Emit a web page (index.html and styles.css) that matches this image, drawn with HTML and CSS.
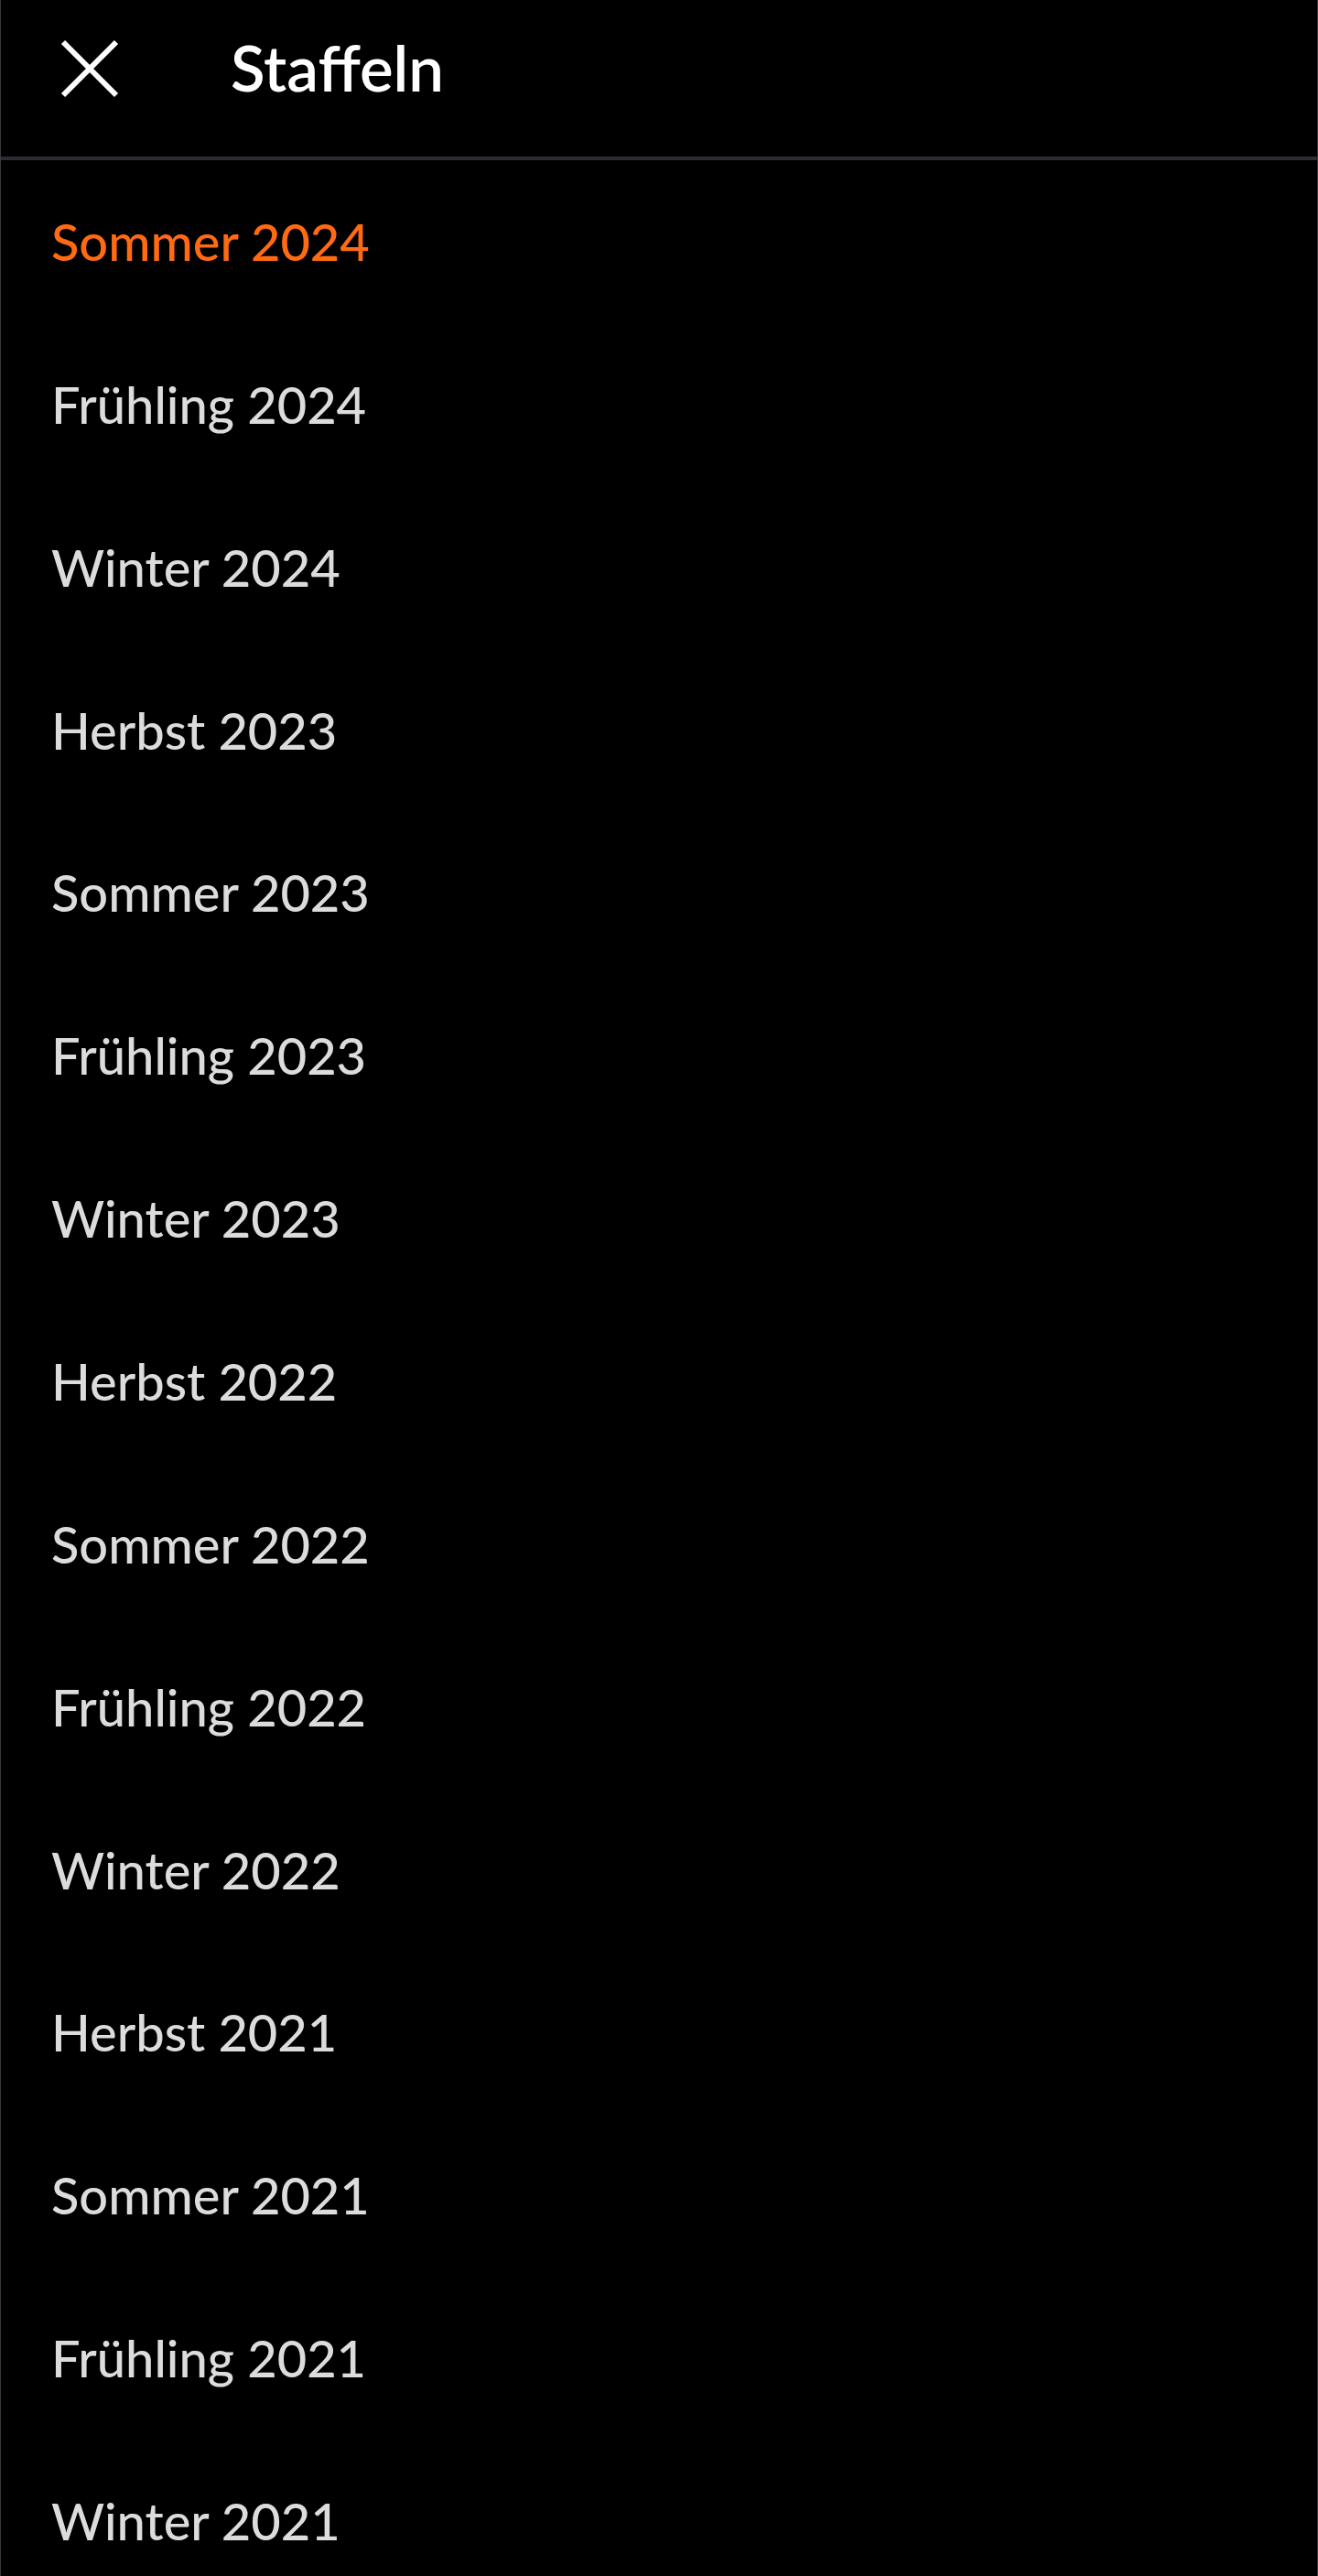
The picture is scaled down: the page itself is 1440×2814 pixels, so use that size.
FILE: index.html
```html
<!DOCTYPE html>
<html lang="de">
<head>
  <meta charset="UTF-8">
  <meta name="viewport" content="width=device-width, initial-scale=1.0">
  <title>Staffeln</title>
  <link rel="stylesheet" href="styles.css">
</head>
<body>
  <div class="season-panel">
    <div class="season-header">
      <button class="close-btn" aria-label="Schließen">
        <svg viewBox="0 0 64 64" width="64" height="64">
          <path d="M3 3 L61 61 M61 3 L3 61" stroke="#fff" stroke-width="6" fill="none"/>
        </svg>
      </button>
      <div class="season-title">Staffeln</div>
    </div>
    <ul class="season-list">
      <li class="season-item active">Sommer 2024</li>
      <li class="season-item">Frühling 2024</li>
      <li class="season-item">Winter 2024</li>
      <li class="season-item">Herbst 2023</li>
      <li class="season-item">Sommer 2023</li>
      <li class="season-item">Frühling 2023</li>
      <li class="season-item">Winter 2023</li>
      <li class="season-item">Herbst 2022</li>
      <li class="season-item">Sommer 2022</li>
      <li class="season-item">Frühling 2022</li>
      <li class="season-item">Winter 2022</li>
      <li class="season-item">Herbst 2021</li>
      <li class="season-item">Sommer 2021</li>
      <li class="season-item">Frühling 2021</li>
      <li class="season-item">Winter 2021</li>
    </ul>
  </div>
</body>
</html>
```

FILE: styles.css
```css
body {
  margin: 0;
  background: #000;
  font-family: Lato, "Open Sans", sans-serif;
}

.season-panel {
  min-height: 2814px;
  border-left: 1px solid #3a3a3c;
  border-right: 1px solid #3a3a3c;
  overflow: hidden;
}

.season-header {
  display: flex;
  align-items: center;
  height: 171px;
  border-bottom: 4px solid #2c2d33;
}

.close-btn {
  background: none;
  border: none;
  padding: 0;
  margin-left: 65px;
  margin-top: -22px;
  width: 64px;
  height: 64px;
  cursor: pointer;
}

.close-btn svg {
  display: block;
}

.season-title {
  margin-left: 122px;
  margin-top: -24px;
  color: #fff;
  font-weight: 600;
  font-size: 69px;
}

.season-list {
  list-style: none;
  margin: 0;
  padding: 0;
}

.season-item {
  height: 177.86px;
  padding-left: 55px;
  box-sizing: border-box;
  padding-top: 61px;
  color: #dcdcdc;
  font-size: 56px;
  font-weight: 500;
  line-height: 1;
}

.season-item.active {
  color: #ff6a13;
}
```
